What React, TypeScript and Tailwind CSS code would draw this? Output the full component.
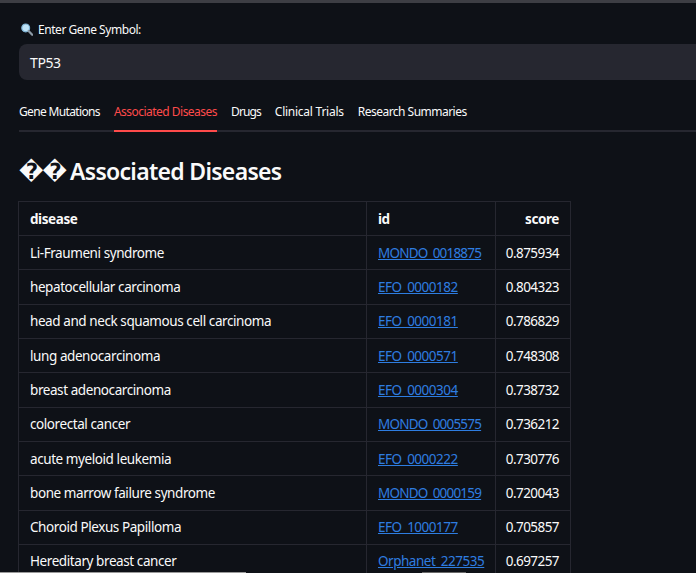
import React from 'react';

const ROWS = [
  { disease: 'Li-Fraumeni syndrome', id: 'MONDO_0018875', score: '0.875934' },
  { disease: 'hepatocellular carcinoma', id: 'EFO_0000182', score: '0.804323' },
  { disease: 'head and neck squamous cell carcinoma', id: 'EFO_0000181', score: '0.786829' },
  { disease: 'lung adenocarcinoma', id: 'EFO_0000571', score: '0.748308' },
  { disease: 'breast adenocarcinoma', id: 'EFO_0000304', score: '0.738732' },
  { disease: 'colorectal cancer', id: 'MONDO_0005575', score: '0.736212' },
  { disease: 'acute myeloid leukemia', id: 'EFO_0000222', score: '0.730776' },
  { disease: 'bone marrow failure syndrome', id: 'MONDO_0000159', score: '0.720043' },
  { disease: 'Choroid Plexus Papilloma', id: 'EFO_1000177', score: '0.705857' },
  { disease: 'Hereditary breast cancer', id: 'Orphanet_227535', score: '0.697257' },
];

const TABS = [
  { label: 'Gene Mutations', tracking: 'tracking-[-0.65px]' },
  { label: 'Associated Diseases', tracking: 'tracking-[-0.52px]' },
  { label: 'Drugs', tracking: 'tracking-[-0.9px]' },
  { label: 'Clinical Trials', tracking: 'tracking-[-0.25px]' },
  { label: 'Research Summaries', tracking: 'tracking-[-0.52px]' },
];

const App: React.FC = () => {
  return (
    <div className="relative h-[573px] w-[696px] overflow-hidden bg-[#0e1117] font-['Noto_Sans',sans-serif] text-[#fafafa]">
      <div className="h-[3px] bg-[#3d3e44]" />

      <div className="pl-[19px] pt-[17px]">
        {/* Gene input */}
        <label className="flex h-[19px] items-center pl-[2px] text-[12px] tracking-[-0.45px]">
          <svg width="12" height="13" viewBox="0 0 12 13" className="mr-[5px]">
            <circle cx="4.7" cy="4.9" r="3.9" fill="#bfe3f7" stroke="#7fb4d6" strokeWidth="1.2" />
            <path d="M7.6 8l3.6 3.8" stroke="#8d9aa6" strokeWidth="2.2" strokeLinecap="round" />
          </svg>
          Enter Gene Symbol:
        </label>
        <div className="mt-[5px] flex h-[36px] w-[700px] items-center rounded-l-lg bg-[#262730] pl-[11px] text-[14px] tracking-[-0.4px]">
          TP53
        </div>

        {/* Tabs */}
        <div className="mt-[20px] flex h-[32px] items-start gap-[14px] border-b-2 border-[#262730] text-[12px]">
          {TABS.map((tab) => (
            <div
              key={tab.label}
              className={
                tab.label === 'Associated Diseases'
                  ? `relative h-[32px] whitespace-nowrap leading-[24px] text-[#ff4b4b] ${tab.tracking}`
                  : `h-[32px] whitespace-nowrap leading-[24px] ${tab.tracking}`
              }
            >
              {tab.label}
              {tab.label === 'Associated Diseases' && <div className="absolute bottom-0 left-0 h-[2px] w-full bg-[#ff4b4b]" />}
            </div>
          ))}
        </div>

        <h2 className="mt-[21px] flex h-[36px] items-center whitespace-nowrap text-[23px] font-semibold tracking-[-0.7px]">
          <span className="font-['DejaVu_Sans',sans-serif] text-[22px] font-bold tracking-[-1px]">��</span>
          <span className="ml-[4px]">Associated Diseases</span>
        </h2>

        {/* Results table */}
        <table className="-ml-px mt-[12px] w-[552px] table-fixed border-collapse text-[13.5px] tracking-[-0.42px]">
          <colgroup>
            <col className="w-[348px]" />
            <col className="w-[129px]" />
            <col className="w-[75px]" />
          </colgroup>
          <thead>
            <tr className="h-[34px] font-bold">
              <th className="border border-[#262730] pl-[11px] pt-px text-left font-bold">disease</th>
              <th className="border border-[#262730] pl-[11px] pt-px text-left font-bold">id</th>
              <th className="border border-[#262730] pr-[11px] pt-px text-right font-bold">score</th>
            </tr>
          </thead>
          <tbody>
            {ROWS.map((row) => (
              <tr key={row.id} className="h-[34.33px]">
                <td className="border border-[#262730] pl-[11px]">{row.disease}</td>
                <td className="border border-[#262730] pl-[11px]">
                  <a
                    href="#"
                    className={
                      row.id.startsWith('MONDO')
                        ? 'tracking-[-0.8px] text-[#2e7de0] underline'
                        : 'tracking-[-0.48px] text-[#2e7de0] underline'
                    }
                  >
                    {row.id}
                  </a>
                </td>
                <td className="border border-[#262730] pr-[11px] text-right tracking-[-0.55px]">{row.score}</td>
              </tr>
            ))}
          </tbody>
        </table>
      </div>

      {/* Screenshot crop edge */}
      <div className="absolute bottom-0 left-0 h-px w-[246px] bg-[#9a9a9a]" />
      <div className="absolute bottom-0 left-[422px] h-px w-[44px] bg-[#6a6a6a]" />
    </div>
  );
};

export default App;
